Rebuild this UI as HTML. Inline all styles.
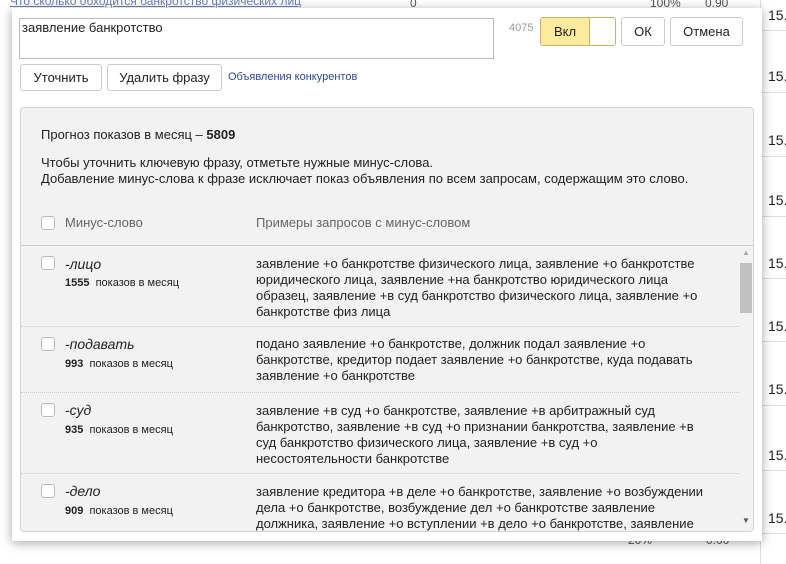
<!DOCTYPE html>
<html><head><meta charset="utf-8"><style>
*{box-sizing:border-box;margin:0;padding:0}
body{width:786px;height:564px;overflow:hidden;background:#fff;font-family:"Liberation Sans","DejaVu Sans",sans-serif;font-size:13px;color:#222;position:relative}
.a{position:absolute;white-space:nowrap}
.bg{color:#555;font-size:12px}
.hl{position:absolute;left:762px;width:24px;height:1px;background:#ddd}
.pop{position:absolute;left:12px;top:8px;width:750px;height:533px;background:#fff;box-shadow:0 2px 10px rgba(0,0,0,.35)}
.btn{position:absolute;height:27px;border:1px solid #ccc;border-radius:3px;background:#fff;font-size:13px;text-align:center;line-height:25px}
.panel{position:absolute;left:8px;top:99px;width:734px;height:425px;background:#f2f2f2;border:1px solid #d4d4d4;border-radius:4px;overflow:hidden}
.cb{position:absolute;width:14px;height:14px;border:1px solid #bbb;border-radius:3px;background:#fff}
.row{position:absolute;left:0;width:718px;border-top:1px dotted #ccc}
.w{position:absolute;font-style:italic;font-size:14px}
.n{position:absolute;font-size:11px}
.n b{font-weight:bold}
.ex{position:absolute;left:235px;line-height:16px;font-size:13px;width:470px}
</style></head><body>
<div class="a" style="left:10px;top:-6px;color:#6a7fb8;font-size:12px;text-decoration:underline">Что сколько обходится банкротство физических лиц</div>
<div class="a bg" style="left:410px;top:-4px">0</div>
<div class="a bg" style="left:650px;top:-4px">100%</div>
<div class="a bg" style="left:705px;top:-4px">0.90</div>
<div class="a bg" style="left:628px;top:533px">20%</div>
<div class="a bg" style="left:706px;top:533px">0.00</div>
<div style="position:absolute;left:760px;top:0;width:1px;height:564px;background:#ddd"></div>
<div class="a" style="left:768px;top:7px;font-size:14px">15.</div>
<div class="a" style="left:768px;top:68px;font-size:14px">15.</div>
<div class="a" style="left:768px;top:132px;font-size:14px">15.</div>
<div class="a" style="left:768px;top:192px;font-size:14px">15.</div>
<div class="a" style="left:768px;top:255px;font-size:14px">15.</div>
<div class="a" style="left:768px;top:318px;font-size:14px">15.</div>
<div class="a" style="left:768px;top:381px;font-size:14px">15.</div>
<div class="a" style="left:768px;top:447px;font-size:14px">15.</div>
<div class="a" style="left:768px;top:510px;font-size:14px">15.</div>
<div class="hl" style="top:30px"></div><div class="hl" style="top:92px"></div><div class="hl" style="top:156px"></div><div class="hl" style="top:216px"></div><div class="hl" style="top:278px"></div><div class="hl" style="top:341px"></div><div class="hl" style="top:405px"></div><div class="hl" style="top:470px"></div><div class="hl" style="top:533px"></div>

<div class="pop">
 <div style="position:absolute;left:7px;top:10px;width:475px;height:41px;border:1px solid #bbb;padding:1px 2px;font-size:13px">заявление банкротство</div>
 <div class="a" style="left:497px;top:14px;font-size:11px;color:#999">4075</div>
 <div style="position:absolute;left:528px;top:9px;width:76px;height:29px;border:1px solid #c9b26a;border-radius:3px;overflow:hidden">
  <div style="position:absolute;left:0;top:0;width:48px;height:27px;background:#fcea9f;text-align:center;line-height:27px">Вкл</div>
  <div style="position:absolute;left:48px;top:0;width:1px;height:27px;background:#c9b26a"></div>
 </div>
 <div class="btn" style="left:609px;top:9px;width:44px;height:29px;line-height:27px">ОК</div>
 <div class="btn" style="left:658px;top:9px;width:73px;height:29px;line-height:27px">Отмена</div>
 <div class="btn" style="left:8px;top:56px;width:82px">Уточнить</div>
 <div class="btn" style="left:95px;top:56px;width:115px">Удалить фразу</div>
 <div class="a" style="left:216px;top:63px;font-size:11px;color:#2b4a8a">Объявления конкурентов</div>
 <div class="panel">
  <div class="a" style="left:20px;top:19px">Прогноз показов в месяц – <b>5809</b></div>
  <div class="a" style="left:20px;top:47px;line-height:16px">Чтобы уточнить ключевую фразу, отметьте нужные минус-слова.<br>Добавление минус-слова к фразе исключает показ объявления по всем запросам, содержащим это слово.</div>
  <div class="cb" style="left:20px;top:108px"></div>
  <div class="a" style="left:44px;top:107px;color:#666">Минус-слово</div>
  <div class="a" style="left:235px;top:107px;color:#666">Примеры запросов с минус-словом</div>
  <div style="position:absolute;left:0;top:137px;width:734px;height:1px;background:#ccc"></div>
  <div class="cb" style="left:20px;top:148px"></div>
  <div class="w" style="left:44px;top:148px">-лицо</div>
  <div class="n" style="left:44px;top:169px"><b>1555</b>&nbsp; показов в месяц</div>
  <div class="ex" style="top:148px">заявление +о банкротстве физического лица, заявление +о банкротстве<br>юридического лица, заявление +на банкротство юридического лица<br>образец, заявление +в суд банкротство физического лица, заявление +о<br>банкротстве физ лица</div>
  <div class="row" style="top:218px"></div>
  <div class="cb" style="left:20px;top:229px"></div>
  <div class="w" style="left:44px;top:228px">-подавать</div>
  <div class="n" style="left:44px;top:250px"><b>993</b>&nbsp; показов в месяц</div>
  <div class="ex" style="top:228px">подано заявление +о банкротстве, должник подал заявление +о<br>банкротстве, кредитор подает заявление +о банкротстве, куда подавать<br>заявление +о банкротстве</div>
  <div class="row" style="top:284px"></div>
  <div class="cb" style="left:20px;top:295px"></div>
  <div class="w" style="left:44px;top:294px">-суд</div>
  <div class="n" style="left:44px;top:316px"><b>935</b>&nbsp; показов в месяц</div>
  <div class="ex" style="top:295px">заявление +в суд +о банкротстве, заявление +в арбитражный суд<br>банкротство, заявление +в суд +о признании банкротства, заявление +в<br>суд банкротство физического лица, заявление +в суд +о<br>несостоятельности банкротстве</div>
  <div class="row" style="top:365px"></div>
  <div class="cb" style="left:20px;top:376px"></div>
  <div class="w" style="left:44px;top:375px">-дело</div>
  <div class="n" style="left:44px;top:397px"><b>909</b>&nbsp; показов в месяц</div>
  <div class="ex" style="top:376px">заявление кредитора +в деле +о банкротстве, заявление +о возбуждении<br>дела +о банкротстве, возбуждение дел +о банкротстве заявление<br>должника, заявление +о вступлении +в дело +о банкротстве, заявление</div>
  <div style="position:absolute;left:718px;top:138px;width:15px;height:287px;background:#f2f2f2"></div>
  <div class="a" style="left:721px;top:140px;font-size:8px;color:#aaa">▲</div>
  <div style="position:absolute;left:719px;top:155px;width:12px;height:50px;background:#c1c1c1"></div>
  <div class="a" style="left:721px;top:408px;font-size:8px;color:#555">▼</div>
 </div>
</div>
</body></html>
